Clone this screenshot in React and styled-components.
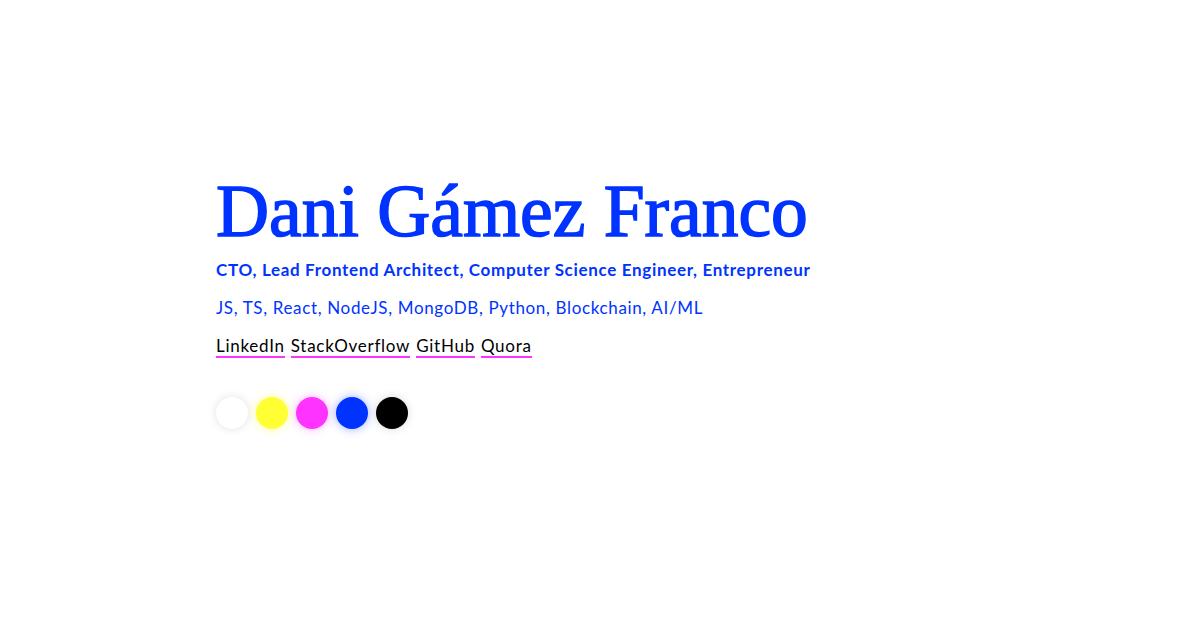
import React from 'react';
import styled, { createGlobalStyle } from 'styled-components';

const GlobalStyle = createGlobalStyle`
  html, body {
    margin: 0;
    padding: 0;
    background: #ffffff;
  }
`;

const Page = styled.main`
  width: 1200px;
  height: 628px;
  box-sizing: border-box;
  padding: 172px 0 0 216px;
  font-family: 'Lato', sans-serif;
`;

const Name = styled.h1`
  margin: 0;
  font-family: 'Liberation Serif', serif;
  font-weight: 400;
  font-size: 73.5px;
  line-height: 80px;
  color: #0033ff;
  -webkit-text-stroke: 1.5px #0033ff;
  white-space: nowrap;
`;

const Roles = styled.p`
  margin: 6px 0 0;
  font-size: 17px;
  font-weight: 700;
  letter-spacing: 0.67px;
  line-height: 24px;
  color: #0033ff;
  white-space: nowrap;
`;

const Skills = styled.p`
  margin: 14px 0 0;
  font-size: 17px;
  letter-spacing: 0.65px;
  line-height: 24px;
  color: #0033ff;
`;

const Links = styled.nav`
  display: flex;
  gap: 6px;
  margin-top: 16px;
`;

const Link = styled.a`
  font-size: 17px;
  letter-spacing: 0.73px;
  line-height: 20px;
  color: #000000;
  text-decoration: none;
  border-bottom: 2px solid #ff33ff;
`;

const Swatches = styled.div`
  display: flex;
  gap: 8px;
  margin-top: 39px;
`;

const Swatch = styled.button`
  width: 32px;
  height: 32px;
  padding: 0;
  border: none;
  border-radius: 50%;
  background: ${({ color }) => color};
  box-shadow: 0 0 10px ${({ glow }) => glow};
  cursor: pointer;
`;

const colors = [
  { color: '#ffffff', glow: 'rgba(0,0,0,0.12)' },
  { color: '#ffff33', glow: 'rgba(255,255,51,0.5)' },
  { color: '#ff33ff', glow: 'rgba(255,51,255,0.4)' },
  { color: '#0033ff', glow: 'rgba(0,51,255,0.4)' },
  { color: '#000000', glow: 'rgba(0,0,0,0.15)' },
];

export default function App() {
  return (
    <>
      <GlobalStyle />
      <Page>
        <Name>Dani Gámez Franco</Name>
        <Roles>CTO, Lead Frontend Architect, Computer Science Engineer, Entrepreneur</Roles>
        <Skills>JS, TS, React, NodeJS, MongoDB, Python, Blockchain, AI/ML</Skills>
        <Links>
          <Link href="#">LinkedIn</Link>
          <Link href="#">StackOverflow</Link>
          <Link href="#">GitHub</Link>
          <Link href="#">Quora</Link>
        </Links>
        <Swatches>
          {colors.map((c) => (
            <Swatch key={c.color} color={c.color} glow={c.glow} />
          ))}
        </Swatches>
      </Page>
    </>
  );
}
